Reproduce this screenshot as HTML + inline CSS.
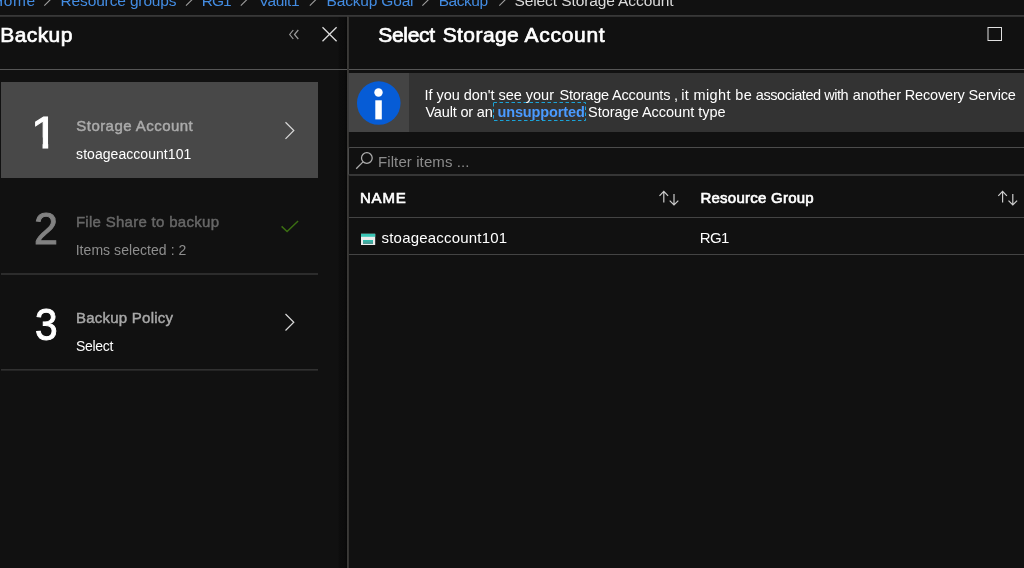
<!DOCTYPE html>
<html><head><meta charset="utf-8"><title>Select Storage Account</title>
<style>
html,body{margin:0;padding:0;}
body{width:1024px;height:568px;overflow:hidden;background:#111111;position:relative;font-family:"Liberation Sans",sans-serif;}
.t{position:absolute;white-space:nowrap;line-height:1;transform-origin:0 0;margin:0;text-decoration:none;}
.g{margin:0;padding:0;height:0;display:block;font-size:0;}
.a{position:absolute;}
#txt{position:absolute;left:0;top:0;width:1024px;height:568px;will-change:transform;}
</style></head><body>
<!-- lines -->
<div class="a" style="left:338px;top:17px;width:9px;height:551px;background:linear-gradient(to right,#111111 0%,#0d0d0d 18%,#0c0c0c 70%,#070707 100%)"></div>
<div class="a" style="left:0;top:15px;width:1024px;height:1px;background:#383838"></div>
<div class="a" style="left:0;top:16px;width:1024px;height:1px;background:#303030"></div>
<div class="a" style="left:0;top:69px;width:1024px;height:1px;background:#565656"></div>
<div class="a" style="left:347px;top:16px;width:1px;height:552px;background:#3b3a38"></div>
<div class="a" style="left:348px;top:16px;width:1px;height:552px;background:#353432"></div>
<!-- step 1 selected -->
<div class="a" style="left:1px;top:82px;width:317px;height:96px;background:#484848"></div>
<div class="a" style="left:1px;top:273px;width:317px;height:2px;background:#2c2c2c"></div>
<div class="a" style="left:1px;top:369px;width:317px;height:1px;background:#313131"></div><div class="a" style="left:1px;top:370px;width:317px;height:1px;background:#242424"></div>
<!-- info box -->
<svg class="a" style="left:0;top:0" width="1024" height="568" viewBox="0 0 1024 568"><rect x="348.5" y="73" width="676" height="59" fill="#333333"/><rect x="348.5" y="73" width="60.5" height="59" fill="#444444"/></svg>
<!-- filter -->
<div class="a" style="left:348px;top:147px;width:681px;height:29px;border:1px solid #4c4c4c;border-bottom:2px solid #363636;border-radius:2px;box-sizing:border-box"></div>
<!-- table lines -->
<div class="a" style="left:349px;top:217px;width:675px;height:1px;background:#444"></div>
<div class="a" style="left:349px;top:254px;width:675px;height:1px;background:#444"></div>
<svg class="a" style="left:0;top:0" width="1024" height="568" viewBox="0 0 1024 568" fill="none">
<!-- breadcrumb chevrons -->
<path d="M44.3 5.7 L52.3 -2.3" stroke="#a0a0a0" stroke-width="1.1"/><path d="M186 5.7 L194 -2.3" stroke="#a0a0a0" stroke-width="1.1"/><path d="M240.8 5.7 L248.8 -2.3" stroke="#a0a0a0" stroke-width="1.1"/><path d="M309.8 5.7 L317.8 -2.3" stroke="#a0a0a0" stroke-width="1.1"/><path d="M422.4 5.7 L430.4 -2.3" stroke="#a0a0a0" stroke-width="1.1"/><path d="M499.3 5.7 L507.3 -2.3" stroke="#a0a0a0" stroke-width="1.1"/>
<rect x="493.5" y="102.5" width="92" height="18" stroke="#1aa3d8" stroke-width="1" stroke-dasharray="3.5 2.5"/>
<!-- info icon -->
<circle cx="378.75" cy="103.05" r="21.8" fill="#065cd6"/><circle cx="378.5" cy="92.5" r="4.2" fill="#fff"/><rect x="375.3" y="100.3" width="6.5" height="19.1" fill="#fff"/>
<!-- search -->
<circle cx="366.85" cy="158" r="5.35" stroke="#aeaeae" stroke-width="1.25"/><path d="M363 161.9 L356.2 168.7" stroke="#aeaeae" stroke-width="1.25"/>
<!-- close, collapse, maximize -->
<path d="M322.5 27.3 L336.6 41.2 M336.6 27.3 L322.5 41.2" stroke="#dcdcdc" stroke-width="1.3"/>
<path d="M293.3 30 L289.7 34.5 L293.3 39 M298.3 30 L294.5 34.5 L298.3 39" stroke="#9a9a9a" stroke-width="1.2"/>
<rect x="988" y="27.5" width="13.5" height="13" stroke="#e0e0e0" stroke-width="1"/>
<!-- chevrons -->
<path d="M285.5 122.3 L293.8 130.5 L285.5 138.8" stroke="#d8d8d8" stroke-width="1.2"/>
<path d="M285.5 314 L293.8 322.2 L285.5 330.5" stroke="#d8d8d8" stroke-width="1.2"/>
<path d="M281.6 226.4 L287.1 231.6 L298.1 221" stroke="#3b6e12" stroke-width="1.45"/>
<!-- sort arrows -->
<path d="M663.8 202.4 V191.4 M659.5 195.9 L663.8 191.3 L668.1 195.9 M674.0 194 V204.8 M669.7 200.7 L674.0 205 L678.3 200.7" stroke="#cdcdcd" stroke-width="1.2"/>
<path d="M1002.6 202.4 V191.4 M998.3 195.9 L1002.6 191.3 L1006.9 195.9 M1012.8 194 V204.8 M1008.5 200.7 L1012.8 205 L1017.1 200.7" stroke="#cdcdcd" stroke-width="1.2"/>
<!-- storage icon -->
<defs><linearGradient id="sg" x1="0" y1="0" x2="0" y2="1"><stop offset="0" stop-color="#2fc0b0"/><stop offset="1" stop-color="#55958f"/></linearGradient></defs>
<rect x="361" y="233.8" width="14.2" height="11.2" fill="#ececec"/><rect x="361" y="233.8" width="14.2" height="3" fill="#3ac6b6"/><rect x="363" y="240" width="10" height="4" fill="url(#sg)"/>
</svg>
<div id="txt">
<nav class="g" aria-label="breadcrumb">
<a class="t" id="bc0" style="left:-8.00px;top:-7.00px;font-size:15.5px;font-weight:400;color:#438ce2;letter-spacing:0.5933px;">Home</a>
<a class="t" id="bc1" style="left:60.50px;top:-7.00px;font-size:15.5px;font-weight:400;color:#438ce2;letter-spacing:-0.1393px;">Resource groups</a>
<a class="t" id="bc2" style="left:201.75px;top:-7.00px;font-size:15.5px;font-weight:400;color:#438ce2;letter-spacing:-1.0600px;">RG1</a>
<a class="t" id="bc3" style="left:258.75px;top:-7.00px;font-size:15.5px;font-weight:400;color:#438ce2;letter-spacing:-0.4080px;">Vault1</a>
<a class="t" id="bc4" style="left:326.60px;top:-7.00px;font-size:15.5px;font-weight:400;color:#438ce2;letter-spacing:-0.1780px;">Backup Goal</a>
<a class="t" id="bc5" style="left:438.75px;top:-7.00px;font-size:15.5px;font-weight:400;color:#438ce2;letter-spacing:-0.4820px;">Backup</a>
<span class="t" id="bc6" style="left:514.50px;top:-7.00px;font-size:15.5px;font-weight:400;color:#dcdcdc;letter-spacing:-0.1000px;">Select Storage Account</span>
</nav>
<section class="g" aria-label="Backup">
<h2 class="t" id="h1" style="left:0.25px;top:24.00px;font-size:21px;font-weight:400;color:#ffffff;letter-spacing:0.4180px;-webkit-text-stroke:0.7px currentColor;">Backup</h2>
<div class="g step">
<span class="t" id="n1" style="left:31.00px;top:111.00px;font-size:44px;font-weight:400;color:#ffffff;transform:scaleX(1.1084);-webkit-text-stroke:1px currentColor;clip-path:polygon(0 0,15.6px 0,15.6px 100%,10.4px 100%,10.4px 60%,0 60%);">1</span>
<span class="t" id="s1a" style="left:76.30px;top:118.00px;font-size:15px;font-weight:400;color:#ababab;letter-spacing:0.4536px;-webkit-text-stroke:0.45px currentColor;">Storage Account</span>
<span class="t" id="s1b" style="left:76.10px;top:147.00px;font-size:14px;font-weight:400;color:#ffffff;letter-spacing:0.0487px;">stoageaccount101</span>
</div>
<div class="g step">
<span class="t" id="n2" style="left:34.00px;top:207.00px;font-size:44px;font-weight:400;color:#828282;transform:scaleX(0.9780);-webkit-text-stroke:1px currentColor;">2</span>
<span class="t" id="s2a" style="left:75.90px;top:214.00px;font-size:15px;font-weight:400;color:#676767;letter-spacing:0.2911px;-webkit-text-stroke:0.45px currentColor;">File Share to backup</span>
<span class="t" id="s2b" style="left:75.65px;top:243.00px;font-size:14px;font-weight:400;color:#8e8e8e;letter-spacing:0.0571px;">Items selected : 2</span>
</div>
<div class="g step">
<span class="t" id="n3" style="left:35.00px;top:303.00px;font-size:44px;font-weight:400;color:#ffffff;transform:scaleX(0.9248);-webkit-text-stroke:1px currentColor;">3</span>
<span class="t" id="s3a" style="left:75.90px;top:310.00px;font-size:15px;font-weight:400;color:#a8a8a8;letter-spacing:0.2500px;-webkit-text-stroke:0.45px currentColor;">Backup Policy</span>
<span class="t" id="s3b" style="left:75.90px;top:339.00px;font-size:14px;font-weight:400;color:#ffffff;letter-spacing:-0.3020px;">Select</span>
</div>
</section>
<section class="g" aria-label="Select Storage Account">
<h2 class="g">
<span class="t" id="h2a" style="left:378.25px;top:24.00px;font-size:21px;font-weight:400;color:#ffffff;letter-spacing:-0.3140px;-webkit-text-stroke:0.7px currentColor;">Select</span>
<span class="t" id="h2b" style="left:442.70px;top:24.00px;font-size:21px;font-weight:400;color:#ffffff;letter-spacing:0.4200px;-webkit-text-stroke:0.7px currentColor;">Storage</span>
<span class="t" id="h2c" style="left:524.55px;top:24.00px;font-size:21px;font-weight:400;color:#ffffff;letter-spacing:0.6933px;-webkit-text-stroke:0.7px currentColor;">Account</span>
</h2>
<div class="g info">
<span class="t" id="i1a" style="left:424.45px;top:88.00px;font-size:14.5px;font-weight:400;color:#ffffff;letter-spacing:-0.0290px;">If you don&#39;t see your</span>
<span class="t" id="i1b" style="left:559.40px;top:88.00px;font-size:14.5px;font-weight:400;color:#ffffff;letter-spacing:-0.1741px;">Storage Accounts ,</span>
<span class="t" id="i1c" style="left:681.20px;top:88.00px;font-size:14.5px;font-weight:400;color:#ffffff;letter-spacing:0.3710px;">it might be</span>
<span class="t" id="i1d" style="left:755.80px;top:88.00px;font-size:14.5px;font-weight:400;color:#ffffff;letter-spacing:-0.4471px;">associated with</span>
<span class="t" id="i1e" style="left:852.80px;top:88.00px;font-size:14.5px;font-weight:400;color:#ffffff;letter-spacing:-0.1626px;">another Recovery Service</span>
<span class="t" id="i2a" style="left:425.45px;top:105.00px;font-size:14.5px;font-weight:400;color:#ffffff;letter-spacing:-0.1770px;">Vault or an</span>
<a class="t" id="i2b" style="left:497.45px;top:105.00px;font-size:14.5px;font-weight:700;color:#4a9aff;letter-spacing:-0.1180px;">unsupported</a>
<span class="t" id="i2c" style="left:588.00px;top:105.00px;font-size:14.5px;font-weight:400;color:#ffffff;letter-spacing:-0.0121px;">Storage Account type</span>
</div>
<div class="g filter">
<span class="t" id="f1" style="left:378.00px;top:154.00px;font-size:15px;font-weight:400;color:#8c8c8c;letter-spacing:0.0973px;">Filter items ...</span>
</div>
<div class="g grid">
<div class="g row head">
<span class="t" id="th1" style="left:359.95px;top:190.00px;font-size:15px;font-weight:400;color:#ffffff;letter-spacing:0.8267px;-webkit-text-stroke:0.65px currentColor;">NAME</span>
<span class="t" id="th2" style="left:700.45px;top:190.00px;font-size:15px;font-weight:400;color:#ffffff;letter-spacing:0.2462px;-webkit-text-stroke:0.65px currentColor;">Resource Group</span>
</div>
<div class="g row">
<span class="t" id="td1" style="left:381.50px;top:230.00px;font-size:15px;font-weight:400;color:#ffffff;letter-spacing:0.2053px;">stoageaccount101</span>
<span class="t" id="td2" style="left:699.75px;top:230.00px;font-size:15px;font-weight:400;color:#ffffff;letter-spacing:-0.6850px;">RG1</span>
</div>
</div>
</section>
</div>
</body></html>
